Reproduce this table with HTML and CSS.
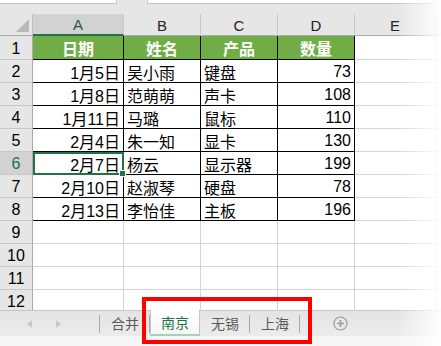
FILE: index.html
```html
<!DOCTYPE html>
<html lang="zh-CN">
<head>
    <meta charset="UTF-8">
    <meta name="viewport" content="width=device-width, initial-scale=1.0">
    <title>销售表</title>
    <link rel="stylesheet" href="styles.css">
</head>
<body>
    <div class="window">
        <div class="formula-strip">
            <div class="name-box"></div>
            <div class="formula-box"></div>
        </div>

        <div class="sheet">
            <div class="grid">
                <!-- column headers -->
                <div class="corner"></div>
                <div class="col-head active">A</div>
                <div class="col-head">B</div>
                <div class="col-head">C</div>
                <div class="col-head">D</div>
                <div class="col-head">E</div>
                <div class="col-head"></div>

                <div class="row-head">1</div>
                <div class="cell title">日期</div>
                <div class="cell title">姓名</div>
                <div class="cell title">产品</div>
                <div class="cell title">数量</div>
                <div class="cell"></div>
                <div class="cell"></div>

                <div class="row-head">2</div>
                <div class="cell data num">1月5日</div>
                <div class="cell data">吴小雨</div>
                <div class="cell data">键盘</div>
                <div class="cell data num">73</div>
                <div class="cell"></div>
                <div class="cell"></div>

                <div class="row-head">3</div>
                <div class="cell data num">1月8日</div>
                <div class="cell data">范萌萌</div>
                <div class="cell data">声卡</div>
                <div class="cell data num">108</div>
                <div class="cell"></div>
                <div class="cell"></div>

                <div class="row-head">4</div>
                <div class="cell data num">1月11日</div>
                <div class="cell data">马璐</div>
                <div class="cell data">鼠标</div>
                <div class="cell data num">110</div>
                <div class="cell"></div>
                <div class="cell"></div>

                <div class="row-head">5</div>
                <div class="cell data num">2月4日</div>
                <div class="cell data">朱一知</div>
                <div class="cell data">显卡</div>
                <div class="cell data num">130</div>
                <div class="cell"></div>
                <div class="cell"></div>

                <div class="row-head active">6</div>
                <div class="cell data num selected">2月7日</div>
                <div class="cell data">杨云</div>
                <div class="cell data">显示器</div>
                <div class="cell data num">199</div>
                <div class="cell"></div>
                <div class="cell"></div>

                <div class="row-head">7</div>
                <div class="cell data num">2月10日</div>
                <div class="cell data">赵淑琴</div>
                <div class="cell data">硬盘</div>
                <div class="cell data num">78</div>
                <div class="cell"></div>
                <div class="cell"></div>

                <div class="row-head">8</div>
                <div class="cell data num">2月13日</div>
                <div class="cell data">李怡佳</div>
                <div class="cell data">主板</div>
                <div class="cell data num">196</div>
                <div class="cell"></div>
                <div class="cell"></div>

                <div class="row-head">9</div>
                <div class="cell"></div><div class="cell"></div><div class="cell"></div>
                <div class="cell"></div><div class="cell"></div><div class="cell"></div>

                <div class="row-head">10</div>
                <div class="cell"></div><div class="cell"></div><div class="cell"></div>
                <div class="cell"></div><div class="cell"></div><div class="cell"></div>

                <div class="row-head">11</div>
                <div class="cell"></div><div class="cell"></div><div class="cell"></div>
                <div class="cell"></div><div class="cell"></div><div class="cell"></div>

                <div class="row-head">12</div>
                <div class="cell"></div><div class="cell"></div><div class="cell"></div>
                <div class="cell"></div><div class="cell"></div><div class="cell"></div>
            </div>
        </div>

        <div class="tab-bar">
            <div class="tab-nav">
                <span class="arrow left"></span>
                <span class="arrow right"></span>
            </div>
            <div class="tab">合并</div>
            <div class="tab current">南京</div>
            <div class="tab">无锡</div>
            <div class="tab">上海</div>
            <div class="add-sheet">
                <svg width="15" height="15" viewBox="0 0 15 15">
                    <circle cx="7.5" cy="7.5" r="6.5" fill="none" stroke="#9a9a9a" stroke-width="1.2"/>
                    <path d="M7.5 4v7M4 7.5h7" stroke="#9a9a9a" stroke-width="1.6"/>
                </svg>
            </div>
        </div>
        <div class="status-strip"></div>

        <!-- red frame around the city sheets -->
        <div class="mark"></div>
        <div class="edge-fade"></div>
    </div>
</body>
</html>
```

FILE: styles.css
```css
body {
    margin: 0;
    background-color: #fff;
    font-family: "Liberation Sans", "Noto Sans CJK SC", sans-serif;
}

.window {
    position: relative;
    width: 441px;
    height: 346px;
    overflow: hidden;
    background-color: #fff;
}

/* formula bar edge */
.formula-strip {
    display: flex;
    height: 14px;
    background-color: #e6e6e6;
}

.name-box,
.formula-box {
    height: 3px;
    background-color: #fff;
    border-bottom: 1px solid #c6c6c6;
    border-right: 1px solid #c6c6c6;
}

.name-box {
    width: 116px;
}

.formula-box {
    width: 286px;
    margin-left: 30px;
    border-left: 1px solid #c6c6c6;
}

/* worksheet grid */
.sheet {
    height: 296px;
    overflow: hidden;
}

.grid {
    display: grid;
    grid-template-columns: 33px 91px 77px 77px 77px 81px 1fr;
    grid-template-rows: 22px 24px repeat(11, 23px);
}

.grid > div {
    box-sizing: border-box;
    display: flex;
    align-items: center;
    font-size: 16px;
    color: #000;
}

.corner {
    position: relative;
    background-color: #e6e6e6;
    border-right: 1px solid #c0c0c0;
    border-bottom: 1px solid #ababab;
}

.corner::after {
    content: "";
    position: absolute;
    right: 3px;
    bottom: 3px;
    border-style: solid;
    border-width: 0 0 13px 13px;
    border-color: transparent transparent #b9b9b9 transparent;
}

.col-head {
    justify-content: center;
    background-color: #e6e6e6;
    border-right: 1px solid #c8c8c8;
    border-bottom: 1px solid #ababab;
    font-size: 15px !important;
    color: #222 !important;
    padding-top: 1px;
}

.col-head.active {
    background-color: #d2d2d2;
    border-bottom: 2px solid #217346;
    color: #1d5c3c !important;
}

.row-head {
    justify-content: center;
    background-color: #e6e6e6;
    border-right: 1px solid #ababab;
    border-bottom: 1px solid #c8c8c8;
    padding-top: 2px;
}

.row-head.active {
    background-color: #d2d2d2;
    color: #217346 !important;
}

.cell {
    border-right: 1px solid #d4d4d4;
    border-bottom: 1px solid #d4d4d4;
    padding: 2px 3px 0 3px;
    white-space: nowrap;
}

.cell.title {
    justify-content: center;
    background-color: #70ad47;
    color: #fff !important;
    font-weight: bold;
    border-right-color: #000;
    border-bottom-color: #000;
    padding-top: 0;
}

.cell.data {
    border-right-color: #000;
    border-bottom-color: #000;
}

.cell.num {
    justify-content: flex-end;
}

.cell.selected {
    position: relative;
    outline: 2px solid #217346;
    outline-offset: -2px;
}

.cell.selected::after {
    content: "";
    position: absolute;
    right: -3px;
    bottom: -3px;
    width: 5px;
    height: 5px;
    background-color: #217346;
    border: 1px solid #fff;
    z-index: 2;
}

/* sheet tabs */
.tab-bar {
    display: flex;
    align-items: stretch;
    height: 26px;
    border-top: 1px solid #c6c6c6;
    box-sizing: border-box;
    background: linear-gradient(#e4e4e4, #ececec);
    font-family: "Noto Sans CJK SC", sans-serif;
    font-size: 14px;
    color: #5a5a5a;
}

.tab-nav {
    position: relative;
    width: 100px;
}

.arrow {
    position: absolute;
    top: 9px;
    border-style: solid;
}

.arrow.left {
    left: 27px;
    border-width: 4px 5px 4px 0;
    border-color: transparent #c9c9c9 transparent transparent;
}

.arrow.right {
    left: 56px;
    border-width: 4px 0 4px 5px;
    border-color: transparent transparent transparent #c9c9c9;
}

.tab-nav::after,
.tab::after {
    content: "";
    position: absolute;
    right: 0;
    top: 4px;
    height: 18px;
    border-right: 1px solid #a9a9a9;
}

.tab {
    position: relative;
    width: 50px;
    display: flex;
    align-items: center;
    justify-content: center;
    padding-bottom: 1px;
}

.tab:first-of-type::after {
    display: none;
}

.tab.current {
    margin-top: -1px;
    background: linear-gradient(#fff, #f6f6f6);
    border-left: 1px solid #c6c6c6;
    border-right: 1px solid #c6c6c6;
    border-bottom: 2px solid #a8d2b6;
    box-sizing: border-box;
    color: #217346;
}

.tab.current::after {
    display: none;
}

.add-sheet {
    display: flex;
    align-items: center;
    margin-left: 33px;
}

.status-strip {
    height: 10px;
    background-color: #f6f6f6;
}

/* annotation frame */
.mark {
    position: absolute;
    left: 142px;
    top: 297px;
    width: 170px;
    height: 47px;
    box-sizing: border-box;
    border: 4px solid #ff0000;
}

.edge-fade {
    position: absolute;
    top: 0;
    right: 0;
    width: 45px;
    height: 100%;
    background: linear-gradient(to right, rgba(255, 255, 255, 0), rgba(255, 255, 255, 0.95));
    pointer-events: none;
}
```
